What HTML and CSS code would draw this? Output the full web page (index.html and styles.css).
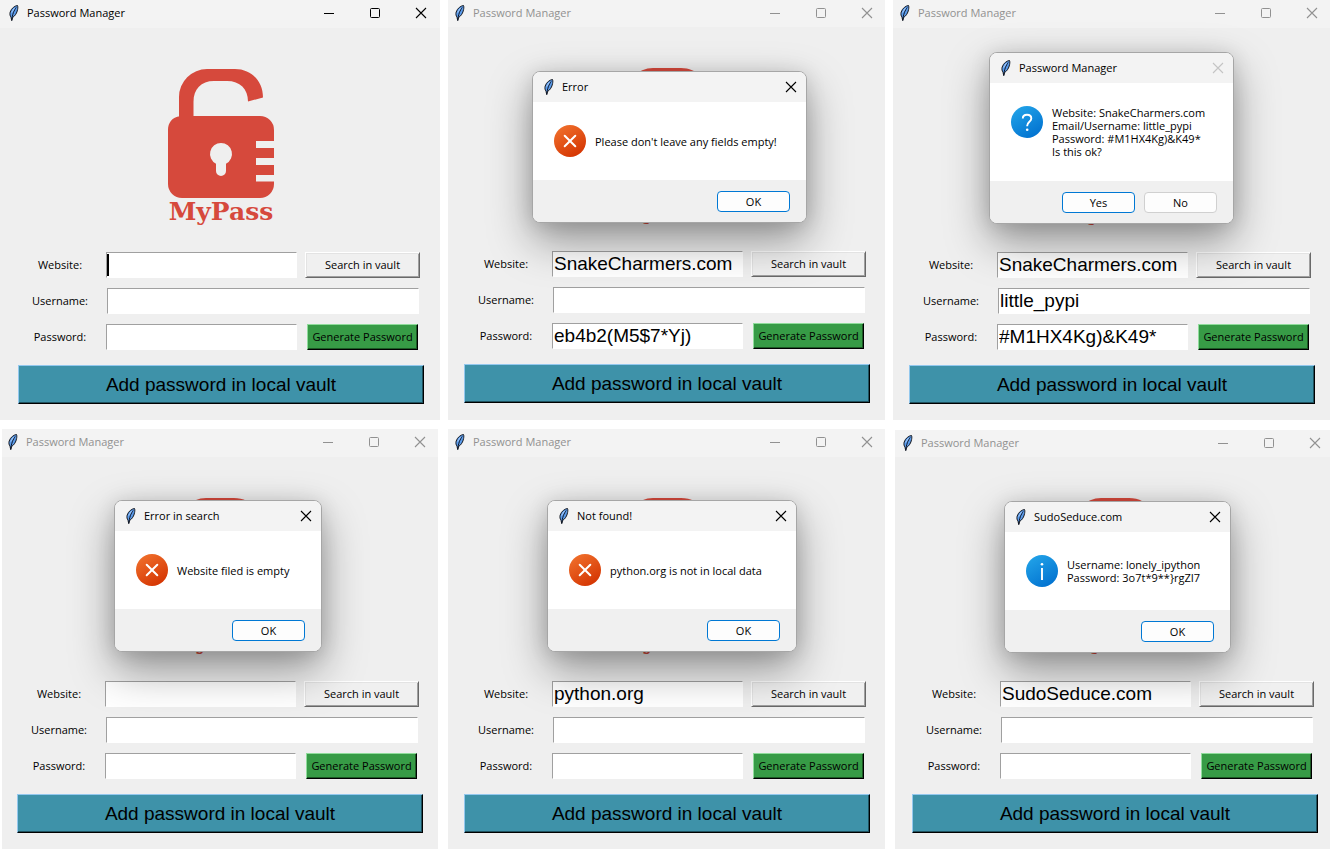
FILE: index.html
```html
<!DOCTYPE html>
<html lang="en">
<head>
<meta charset="utf-8">
<title>Password Manager</title>
<link rel="stylesheet" href="styles.css">
</head>
<body>
<svg class="sprite" aria-hidden="true">
  <defs>
    <linearGradient id="g-red" x1="0.2" y1="0" x2="0.8" y2="1"><stop offset="0" stop-color="#f0702c"/><stop offset="1" stop-color="#d33200"/></linearGradient>
    <linearGradient id="g-blue" x1="0.2" y1="0" x2="0.8" y2="1"><stop offset="0" stop-color="#22a3e8"/><stop offset="1" stop-color="#0070cf"/></linearGradient>
  </defs>
  <symbol id="feather" viewBox="0 0 10 16">
    <path d="M8.500 .5C6 .8 2.500 3 1.200 7C.6 9 1 11 2 12.200L2.700 15.500L3.600 12.500C6 11 8 8 8.600 4.500C8.900 2.800 8.900 1.300 8.500 .5Z" fill="#5b9bea" stroke="#15181f" stroke-width="1"/>
    <path d="M7.200 2.500C5 5.500 3.300 9 2.800 15.500" fill="none" stroke="#0d1526" stroke-width="1"/>
    <path d="M5.500 3.200L2.600 7.500" stroke="#a9cdfa" stroke-width="1"/>
  </symbol>
  <symbol id="minimize" viewBox="0 0 12 12"><path d="M1 6.500H11" stroke="currentColor" fill="none"/></symbol>
  <symbol id="maximize" viewBox="0 0 12 12"><rect x="1.500" y="1.500" width="9" height="9" rx="1" stroke="currentColor" fill="none"/></symbol>
  <symbol id="close" viewBox="0 0 12 12"><path d="M1 1L11 11M11 1L1 11" stroke="currentColor" stroke-width="1.100" fill="none"/></symbol>
  <symbol id="error" viewBox="0 0 32 32"><circle cx="16" cy="16" r="16" fill="url(#g-red)"/><path d="M10.700 10.700L21.300 21.300M21.300 10.700L10.700 21.300" stroke="#fff" stroke-width="2" stroke-linecap="round"/></symbol>
  <symbol id="question" viewBox="0 0 32 32"><circle cx="16" cy="16" r="16" fill="url(#g-blue)"/><path d="M11.800 12.500C11.800 10 13.600 8.800 16 8.800C18.500 8.800 20.300 10.300 20.300 12.500C20.300 15.700 16.200 16 16.200 19.800V20.300" fill="none" stroke="#fff" stroke-width="1.900"/><circle cx="16.200" cy="23.700" r="1.300" fill="#fff"/></symbol>
  <symbol id="info" viewBox="0 0 32 32"><circle cx="16" cy="16" r="16" fill="url(#g-blue)"/><path d="M16 13V25" stroke="#fff" stroke-width="1.900"/><circle cx="16" cy="9.300" r="1.300" fill="#fff"/></symbol>
  <symbol id="lock" viewBox="0 0 106 130">
    <path d="M11 49V28A28 28 0 0 1 39 0H67C83 0 95 12 95 28.500L80 32.500C80 20 72 12 59 12H46C33 12 25.500 20 25.500 33V47H92A14 14 0 0 1 106 61V72H88V79H106V89H88V96H106V106H88V112.500H106V115A14 14 0 0 1 92 129H14A14 14 0 0 1 0 115V61C0 54 4 48.500 11 47.200Z" fill="#d6493c"/>
    <path d="M53 74A11 11 0 0 1 58 94.800V102A5 5 0 0 1 48 102V94.800A11 11 0 0 1 53 74Z" fill="#efefef"/>
  </symbol>
</svg>

<main class="sheet">
  <div class="row row--top">
    <section class="window window--first">
      <header class="titlebar">
        <svg class="feather"><use href="#feather"/></svg><h2 class="title">Password Manager</h2>
        <button class="tool" aria-label="Minimize"><svg><use href="#minimize"/></svg></button>
        <button class="tool" aria-label="Maximize"><svg><use href="#maximize"/></svg></button>
        <button class="tool" aria-label="Close"><svg><use href="#close"/></svg></button>
      </header>
      <div class="logo"><svg class="lock"><use href="#lock"/></svg><span class="brand">MyPass</span></div>
      <form class="form">
        <label class="label" for="w1">Website:</label><input class="entry entry--caret" id="w1" type="text"><button class="btn" type="button">Search in vault</button>
        <label class="label" for="u1">Username:</label><input class="entry entry--wide" id="u1" type="text">
        <label class="label" for="p1">Password:</label><input class="entry" id="p1" type="text"><button class="btn btn--green" type="button">Generate Password</button>
        <button class="btn btn--add" type="button">Add password in local vault</button>
      </form>
    </section>

    <section class="window window--inactive window--short">
      <header class="titlebar">
        <svg class="feather"><use href="#feather"/></svg><h2 class="title">Password Manager</h2>
        <button class="tool" aria-label="Minimize"><svg><use href="#minimize"/></svg></button>
        <button class="tool" aria-label="Maximize"><svg><use href="#maximize"/></svg></button>
        <button class="tool" aria-label="Close"><svg><use href="#close"/></svg></button>
      </header>
      <div class="logo"><svg class="lock"><use href="#lock"/></svg><span class="brand">MyPass</span></div>
      <form class="form">
        <label class="label" for="w2">Website:</label><input class="entry" id="w2" type="text" value="SnakeCharmers.com"><button class="btn" type="button">Search in vault</button>
        <label class="label" for="u2">Username:</label><input class="entry entry--wide" id="u2" type="text">
        <label class="label" for="p2">Password:</label><input class="entry" id="p2" type="text" value="eb4b2(M5$7*Yj)"><button class="btn btn--green" type="button">Generate Password</button>
        <button class="btn btn--add" type="button">Add password in local vault</button>
      </form>
      <div class="dialog dialog--empty" role="dialog" aria-labelledby="d2">
        <header class="dialog-bar"><svg class="feather"><use href="#feather"/></svg><h3 class="title" id="d2">Error</h3><button class="tool" aria-label="Close"><svg><use href="#close"/></svg></button></header>
        <div class="dialog-body"><svg class="sign"><use href="#error"/></svg><p class="message">Please don't leave any fields empty!</p></div>
        <footer class="dialog-foot"><button class="choice choice--default">OK</button></footer>
      </div>
    </section>

    <section class="window window--inactive">
      <header class="titlebar">
        <svg class="feather"><use href="#feather"/></svg><h2 class="title">Password Manager</h2>
        <button class="tool" aria-label="Minimize"><svg><use href="#minimize"/></svg></button>
        <button class="tool" aria-label="Maximize"><svg><use href="#maximize"/></svg></button>
        <button class="tool" aria-label="Close"><svg><use href="#close"/></svg></button>
      </header>
      <div class="logo"><svg class="lock"><use href="#lock"/></svg><span class="brand">MyPass</span></div>
      <form class="form">
        <label class="label" for="w3">Website:</label><input class="entry" id="w3" type="text" value="SnakeCharmers.com"><button class="btn" type="button">Search in vault</button>
        <label class="label" for="u3">Username:</label><input class="entry entry--wide" id="u3" type="text" value="little_pypi">
        <label class="label" for="p3">Password:</label><input class="entry" id="p3" type="text" value="#M1HX4Kg)&amp;K49*"><button class="btn btn--green" type="button">Generate Password</button>
        <button class="btn btn--add" type="button">Add password in local vault</button>
      </form>
      <div class="dialog dialog--confirm" role="dialog" aria-labelledby="d3">
        <header class="dialog-bar"><svg class="feather"><use href="#feather"/></svg><h3 class="title" id="d3">Password Manager</h3><button class="tool tool--off" aria-label="Close" disabled><svg><use href="#close"/></svg></button></header>
        <div class="dialog-body"><svg class="sign"><use href="#question"/></svg><p class="message">Website: SnakeCharmers.com<br>Email/Username: little_pypi<br>Password: #M1HX4Kg)&amp;K49*<br>Is this ok?</p></div>
        <footer class="dialog-foot"><button class="choice choice--default">Yes</button><button class="choice">No</button></footer>
      </div>
    </section>
  </div>

  <div class="row row--bottom">
    <section class="window window--inactive window--narrow">
      <header class="titlebar">
        <svg class="feather"><use href="#feather"/></svg><h2 class="title">Password Manager</h2>
        <button class="tool" aria-label="Minimize"><svg><use href="#minimize"/></svg></button>
        <button class="tool" aria-label="Maximize"><svg><use href="#maximize"/></svg></button>
        <button class="tool" aria-label="Close"><svg><use href="#close"/></svg></button>
      </header>
      <div class="logo"><svg class="lock"><use href="#lock"/></svg><span class="brand">MyPass</span></div>
      <form class="form">
        <label class="label" for="w4">Website:</label><input class="entry" id="w4" type="text"><button class="btn" type="button">Search in vault</button>
        <label class="label" for="u4">Username:</label><input class="entry entry--wide" id="u4" type="text">
        <label class="label" for="p4">Password:</label><input class="entry" id="p4" type="text"><button class="btn btn--green" type="button">Generate Password</button>
        <button class="btn btn--add" type="button">Add password in local vault</button>
      </form>
      <div class="dialog dialog--search" role="dialog" aria-labelledby="d4">
        <header class="dialog-bar"><svg class="feather"><use href="#feather"/></svg><h3 class="title" id="d4">Error in search</h3><button class="tool" aria-label="Close"><svg><use href="#close"/></svg></button></header>
        <div class="dialog-body"><svg class="sign"><use href="#error"/></svg><p class="message">Website filed is empty</p></div>
        <footer class="dialog-foot"><button class="choice choice--default">OK</button></footer>
      </div>
    </section>

    <section class="window window--inactive">
      <header class="titlebar">
        <svg class="feather"><use href="#feather"/></svg><h2 class="title">Password Manager</h2>
        <button class="tool" aria-label="Minimize"><svg><use href="#minimize"/></svg></button>
        <button class="tool" aria-label="Maximize"><svg><use href="#maximize"/></svg></button>
        <button class="tool" aria-label="Close"><svg><use href="#close"/></svg></button>
      </header>
      <div class="logo"><svg class="lock"><use href="#lock"/></svg><span class="brand">MyPass</span></div>
      <form class="form">
        <label class="label" for="w5">Website:</label><input class="entry" id="w5" type="text" value="python.org"><button class="btn" type="button">Search in vault</button>
        <label class="label" for="u5">Username:</label><input class="entry entry--wide" id="u5" type="text">
        <label class="label" for="p5">Password:</label><input class="entry" id="p5" type="text"><button class="btn btn--green" type="button">Generate Password</button>
        <button class="btn btn--add" type="button">Add password in local vault</button>
      </form>
      <div class="dialog dialog--missing" role="dialog" aria-labelledby="d5">
        <header class="dialog-bar"><svg class="feather"><use href="#feather"/></svg><h3 class="title" id="d5">Not found!</h3><button class="tool" aria-label="Close"><svg><use href="#close"/></svg></button></header>
        <div class="dialog-body"><svg class="sign"><use href="#error"/></svg><p class="message">python.org is not in local data</p></div>
        <footer class="dialog-foot"><button class="choice choice--default">OK</button></footer>
      </div>
    </section>

    <section class="window window--inactive window--last window--short">
      <header class="titlebar">
        <svg class="feather"><use href="#feather"/></svg><h2 class="title">Password Manager</h2>
        <button class="tool" aria-label="Minimize"><svg><use href="#minimize"/></svg></button>
        <button class="tool" aria-label="Maximize"><svg><use href="#maximize"/></svg></button>
        <button class="tool" aria-label="Close"><svg><use href="#close"/></svg></button>
      </header>
      <div class="logo"><svg class="lock"><use href="#lock"/></svg><span class="brand">MyPass</span></div>
      <form class="form">
        <label class="label" for="w6">Website:</label><input class="entry" id="w6" type="text" value="SudoSeduce.com"><button class="btn" type="button">Search in vault</button>
        <label class="label" for="u6">Username:</label><input class="entry entry--wide" id="u6" type="text">
        <label class="label" for="p6">Password:</label><input class="entry" id="p6" type="text"><button class="btn btn--green" type="button">Generate Password</button>
        <button class="btn btn--add" type="button">Add password in local vault</button>
      </form>
      <div class="dialog dialog--found" role="dialog" aria-labelledby="d6">
        <header class="dialog-bar"><svg class="feather"><use href="#feather"/></svg><h3 class="title" id="d6">SudoSeduce.com</h3><button class="tool" aria-label="Close"><svg><use href="#close"/></svg></button></header>
        <div class="dialog-body"><svg class="sign"><use href="#info"/></svg><p class="message">Username: lonely_ipython<br>Password: 3o7t*9**}rgZI7</p></div>
        <footer class="dialog-foot"><button class="choice choice--default">OK</button></footer>
      </div>
    </section>
  </div>
</main>
</body>
</html>
```

FILE: styles.css
```css
*, *::before, *::after { box-sizing: border-box; }

body {
  margin: 0;
  background: #fff;
  color: #000;
  font-family: "Open Sans", "Noto Sans", sans-serif;
  font-size: 11px;
  line-height: 16px;
}

button, input { font: inherit; color: inherit; margin: 0; border-radius: 0; }
h2, h3, p { margin: 0; font-size: 11px; font-weight: 400; }
.sprite { position: absolute; width: 0; height: 0; }

.sheet { display: grid; gap: 9px; }
.row { display: grid; }
.row--top { grid-template-columns: 440fr 437fr 437fr; gap: 8px; }
.row--bottom { grid-template-columns: 436fr 437fr 435fr; gap: 10px; padding-left: 2px; }

/* Windows */
.window {
  --left: 16px;
  --right: 15px;
  --bar: 28px;
  --tools: 12px;
  position: relative;
  overflow: hidden;
  min-width: 0;
  padding-bottom: 16px;
  background: #efefef;
}
.window--first { --left: 18px; --right: 16px; --tools: 13px; }
.window--narrow { --left: 15px; }
.window--last { --left: 17px; --right: 12px; --tools: 9px; margin-top: 1px; }
.window--short { --bar: 27px; }

.titlebar {
  display: flex;
  align-items: center;
  height: var(--bar);
  padding: 0 var(--tools) 2px calc(var(--left) - 9px);
  background: #f3f3f3;
}
.feather { width: 10px; height: 16px; margin-right: 8px; flex: none; }
.title { flex: 1; white-space: nowrap; }
.tool {
  width: 12px;
  height: 12px;
  padding: 0;
  border: 0;
  background: none;
  margin-left: 34px;
}
.tool svg { display: block; width: 12px; height: 12px; }
.tool--off { color: #c4c4c4; }
.window--inactive .titlebar .title,
.window--inactive .titlebar .tool { color: #919191; }

.logo {
  display: flex;
  flex-direction: column;
  align-items: center;
  height: 224px;
  padding: 41px var(--right) 0 var(--left);
}
.lock { width: 106px; height: 130px; flex: none; }
.brand {
  color: #d6493c;
  font: 700 25px/26px "DejaVu Serif", serif;
}

/* Form */
.form {
  display: grid;
  grid-template-columns: 80px 1fr 115px;
  column-gap: 8px;
  row-gap: 10px;
  padding: 0 calc(var(--right) + 4px) 0 var(--left);
}
.label { align-self: center; text-align: center; padding-left: 4px; }
.entry {
  width: 100%;
  min-width: 0;
  height: 26px;
  padding: 0 1px;
  border: 1px solid #a0a0a0;
  border-right-color: #fff;
  border-bottom-color: #fff;
  background-color: #fff;
  font: 19px/24px "Liberation Sans", Arial, sans-serif;
  outline: 0;
}
.entry--caret { background: linear-gradient(#000, #000) 0 1px / 2px 22px no-repeat #fff; }
.entry--wide { grid-column: 2 / 4; width: auto; margin: 0 1px; }
.btn {
  height: 26px;
  padding: 0;
  border: 1px solid;
  border-color: #fff #696969 #696969 #fff;
  box-shadow: inset 1px 1px #e3e3e3, inset -1px -1px #a0a0a0;
  background: #f0f0f0;
  white-space: nowrap;
}
.btn--green {
  margin: 0 2px;
  border-color: #8fdc9b #000 #000 #8fdc9b;
  box-shadow: inset -1px -1px #1d5a26;
  background: #379b46;
}
.btn--add {
  grid-column: 1 / -1;
  height: 39px;
  margin: 5px -4px 0 0;
  border-color: #93c8ee #000 #000 #93c8ee;
  box-shadow: inset -1px -1px #20525f;
  background: #3e92a9;
  font: 19px/24px "Liberation Sans", Arial, sans-serif;
}

/* Message boxes floating over their window */
.dialog {
  position: absolute;
  top: 71px;
  overflow: hidden;
  border: 1px solid #a6a6a6;
  border-radius: 8px;
  background: #fff;
  box-shadow: 0 18px 44px rgba(0, 0, 0, 0.38), 0 2px 20px rgba(0, 0, 0, 0.12);
}
.dialog--empty { left: 84px; width: 275px; }
.dialog--confirm { left: 96px; top: 52px; width: 245px; }
.dialog--search { left: 112px; width: 208px; }
.dialog--missing { left: 99px; width: 250px; }
.dialog--found { left: 109px; width: 227px; }

.dialog-bar {
  display: flex;
  align-items: center;
  height: 30px;
  padding: 0 9px 0 11px;
  background: #f3f3f3;
}
.dialog-body {
  display: flex;
  gap: 9px;
  padding: 23px 0 23px 21px;
}
.sign { width: 32px; height: 32px; flex: none; }
.message { align-self: center; line-height: 13px; white-space: nowrap; }
.dialog-foot {
  display: flex;
  justify-content: flex-end;
  gap: 9px;
  padding: 11px 16px 10px;
  background: #f0f0f0;
}
.choice {
  width: 73px;
  height: 21px;
  padding: 0;
  border: 1px solid #d0d0d0;
  border-radius: 4px;
  background: #fdfdfd;
  line-height: 19px;
}
.choice--default { border-color: #0078d4; }
```
